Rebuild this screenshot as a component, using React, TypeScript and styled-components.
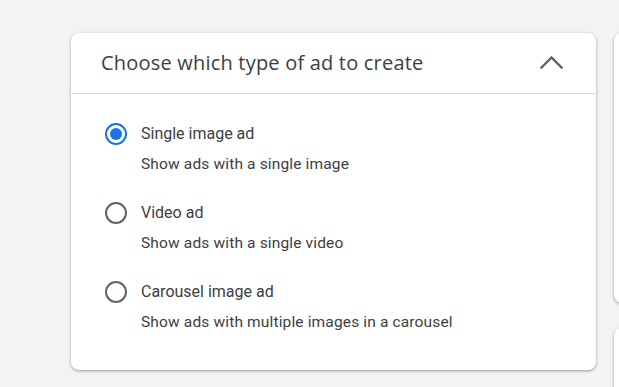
import styled, { createGlobalStyle } from "styled-components";

const GlobalStyle = createGlobalStyle`
  html, body {
    margin: 0;
    padding: 0;
    background: #f1f3f4;
    overflow: hidden;
  }
`;

const options = [
  {
    id: "single",
    title: "Single image ad",
    description: "Show ads with a single image",
    checked: true,
  },
  {
    id: "video",
    title: "Video ad",
    description: "Show ads with a single video",
    checked: false,
  },
  {
    id: "carousel",
    title: "Carousel image ad",
    description: "Show ads with multiple images in a carousel",
    checked: false,
  },
];

export default function App() {
  return (
    <>
      <GlobalStyle />
      <Page>
        <Card>
          <Header>
            <Title>Choose which type of ad to create</Title>
            <Chevron viewBox="0 0 23 13">
              <polyline points="1.5,11.5 11.5,1.5 21.5,11.5" />
            </Chevron>
          </Header>
          <Body>
            {options.map((option) => (
              <Option key={option.id}>
                <Radio checked={option.checked} />
                <OptionText>
                  <OptionTitle>{option.title}</OptionTitle>
                  <OptionDescription>{option.description}</OptionDescription>
                </OptionText>
              </Option>
            ))}
          </Body>
        </Card>
        <SideColumn>
          <SideCard $height={270} />
          <SideCard $height={120} />
        </SideColumn>
      </Page>
    </>
  );
}

const Page = styled.div`
  display: flex;
  align-items: flex-start;
  column-gap: 18px;
  padding: 33px 0 0 71px;
  height: 387px;
  box-sizing: border-box;
  overflow: hidden;
`;

const Card = styled.div`
  flex: none;
  width: 525px;
  height: 337px;
  background: #ffffff;
  border-radius: 8px;
  box-shadow: 0 1px 2px 0 rgba(60, 64, 67, 0.3),
    0 1px 3px 1px rgba(60, 64, 67, 0.15);
  box-sizing: border-box;
`;

const Header = styled.div`
  display: flex;
  align-items: center;
  justify-content: space-between;
  height: 61px;
  padding: 0 33px 1px 30px;
  border-bottom: 1px solid #dadce0;
  box-sizing: border-box;
`;

const Title = styled.div`
  font-family: "Open Sans", "Noto Sans", sans-serif;
  font-size: 20px;
  letter-spacing: 0.2px;
  font-weight: 400;
  color: #3c4043;
  line-height: 26px;
`;

const Chevron = styled.svg`
  width: 23px;
  height: 13px;
  fill: none;
  stroke: #5f6368;
  stroke-width: 2.4;
  stroke-linecap: square;
  margin-top: -1px;
`;

const Body = styled.div`
  display: flex;
  flex-direction: column;
  row-gap: 27px;
  padding: 28px 0 0 34px;
`;

const Option = styled.div`
  display: flex;
  align-items: flex-start;
  column-gap: 14px;
`;

const Radio = styled.div<{ checked: boolean }>`
  position: relative;
  flex: none;
  width: 22px;
  height: 22px;
  margin-top: 1px;
  border-radius: 50%;
  border: 2px solid ${(p) => (p.checked ? "#1a73e8" : "#5f6368")};
  box-sizing: border-box;

  &::after {
    content: "";
    position: absolute;
    top: 3px;
    left: 3px;
    width: 12px;
    height: 12px;
    border-radius: 50%;
    background: #1a73e8;
    display: ${(p) => (p.checked ? "block" : "none")};
  }
`;

const OptionText = styled.div`
  display: flex;
  flex-direction: column;
  row-gap: 8px;
`;

const OptionTitle = styled.div`
  font-family: Roboto, "Liberation Sans", sans-serif;
  font-size: 16px;
  line-height: 24px;
  color: #3c4043;
`;

const OptionDescription = styled.div`
  font-family: Roboto, "Liberation Sans", sans-serif;
  font-size: 15.5px;
  letter-spacing: 0.15px;
  line-height: 20px;
  color: #3c4043;
`;

const SideColumn = styled.div`
  display: flex;
  flex-direction: column;
  row-gap: 25px;
  flex: none;
`;

const SideCard = styled.div<{ $height: number }>`
  width: 300px;
  height: ${(p) => p.$height}px;
  background: #ffffff;
  border-radius: 8px;
  box-shadow: 0 1px 2px 0 rgba(60, 64, 67, 0.3),
    0 1px 3px 1px rgba(60, 64, 67, 0.15);
`;
